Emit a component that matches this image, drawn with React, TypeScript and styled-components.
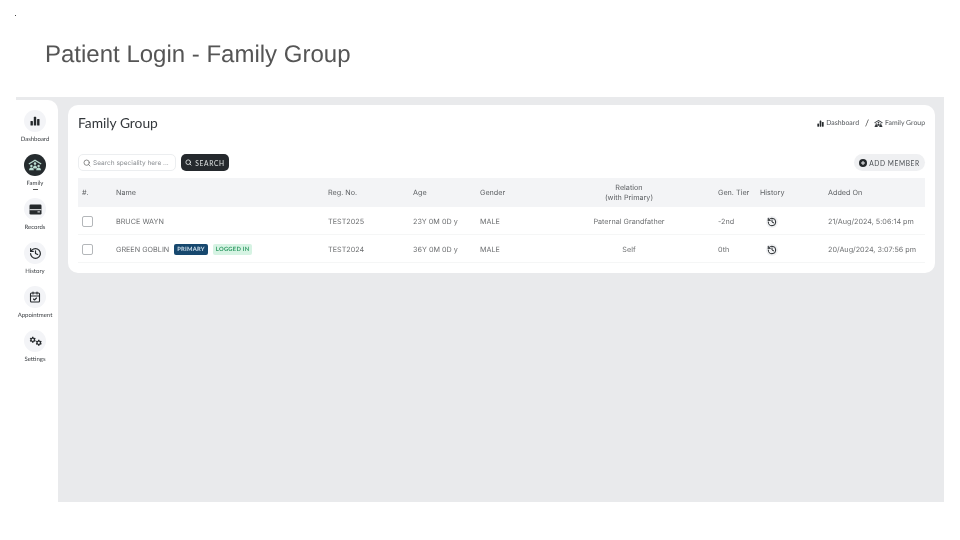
import React from 'react'
import styled, { createGlobalStyle } from 'styled-components'
import { CalendarCheck, History, Search } from 'lucide-react'
import { MdSettings } from 'react-icons/md'

const Global = createGlobalStyle`
  html, body { margin: 0; padding: 0; background: #fff; }
  #root { width: 960px; height: 540px; overflow: hidden; }
  * { box-sizing: border-box; }
`

const Slide = styled.div`
  position: relative;
  width: 960px;
  height: 540px;
  padding: 0 16px;
  font-family: Inter, 'Noto Sans', sans-serif;
  text-rendering: geometricPrecision;
  will-change: transform;
`

const Dot = styled.i`
  position: absolute;
  left: 15px;
  top: 15px;
  width: 1px;
  height: 1px;
  background: #444;
`

const SlideTitle = styled.h1`
  margin: 0;
  height: 97px;
  padding: 40px 0 0 29px;
  font: 400 24px/30px 'Liberation Sans', Arial, sans-serif;
  color: #555;
`

const Shell = styled.div`
  display: flex;
  width: 928px;
  height: 405px;
  padding-top: 3px;
  background: #e9eaec;
`

const Side = styled.nav`
  flex: 0 0 42px;
  display: flex;
  flex-direction: column;
  padding: 10px 4px 0 0;
  background: #fff;
  border-top-right-radius: 10px;
`

const SideItem = styled.div`
  position: relative;
  height: 44px;
  display: flex;
  flex-direction: column;
  align-items: center;
`

const Circle = styled.span<{ $active?: boolean }>`
  width: 22px;
  height: 22px;
  flex: none;
  display: flex;
  align-items: center;
  justify-content: center;
  border-radius: 50%;
  background: ${(p) => (p.$active ? '#252b2e' : '#f3f4f7')};
  color: #25292c;
`

const SideLabel = styled.span`
  margin-top: 4px;
  font: 400 6px/8px Lato, sans-serif;
  color: #3d4145;
  white-space: nowrap;
`

const ActiveDash = styled.i`
  position: absolute;
  top: 35px;
  width: 5px;
  height: 1px;
  background: #555;
`

const GearPair = styled.span`
  width: 13px;
  height: 11px;
  display: flex;
  align-items: flex-start;
  font-size: 7.5px;
  svg {
    flex: none;
  }
  svg:last-child {
    margin: 3.5px 0 0 -1.5px;
  }
`

const Main = styled.main`
  flex: 1;
  padding: 5px 9px 0 10px;
`

const Card = styled.section`
  height: 168px;
  padding: 0 10px;
  background: #fff;
  border-radius: 10px;
`

const TopRow = styled.div`
  height: 49px;
  display: flex;
  align-items: center;
  justify-content: space-between;
  padding-bottom: 13px;
`

const CardTitle = styled.h2`
  margin: 0;
  font: 400 13.8px/18px Lato, sans-serif;
  color: #33373b;
`

const Crumbs = styled.div`
  display: flex;
  align-items: center;
  font: 400 6.9px/8px Lato, sans-serif;
  color: #55595d;
  svg {
    margin-right: 2px;
  }
`

const CrumbSep = styled.span`
  margin: 0 5px 0 6px;
  font-size: 9px;
  color: #333;
`

const Tools = styled.div`
  height: 24px;
  display: flex;
  align-items: flex-start;
`

const SearchBox = styled.div`
  width: 98px;
  height: 17px;
  display: flex;
  align-items: center;
  gap: 2px;
  padding-left: 4px;
  border: 1px solid #eceef0;
  border-radius: 5px;
  font: 400 6.5px/8px Inter, sans-serif;
  color: #8b8f93;
  svg {
    color: #777;
  }
`

const SearchButton = styled.button`
  width: 48px;
  height: 17px;
  margin-left: 5px;
  display: flex;
  align-items: center;
  justify-content: center;
  gap: 3px;
  padding: 0;
  border: 0;
  border-radius: 5px;
  background: #25292d;
  color: #dfe3e3;
  font: 400 6.6px/8px Lato, sans-serif;
  letter-spacing: 0.7px;
`

const AddButton = styled.button`
  width: 71px;
  height: 17px;
  margin-left: auto;
  display: flex;
  align-items: center;
  justify-content: center;
  gap: 2px;
  padding: 0;
  border: 0;
  border-radius: 9px;
  background: #eff0f2;
  color: #4a4e52;
  font: 400 6.6px/8px Lato, sans-serif;
  letter-spacing: 0.6px;
`

const Grid = styled.div<{ $head?: boolean }>`
  display: grid;
  grid-template-columns: 38px 212px 85px 67px 60px 178px 42px 68px 97px;
  align-items: center;
  height: ${(p) => (p.$head ? '29px' : '28px')};
  padding-top: ${(p) => (p.$head ? '0' : '2px')};
  background: ${(p) => (p.$head ? '#f3f4f6' : '#fff')};
  border-bottom: ${(p) => (p.$head ? '0' : '1px solid #f5f6f6')};
  font: 400 7.2px/10px Inter, 'Noto Sans', sans-serif;
  letter-spacing: 0.02px;
  color: ${(p) => (p.$head ? '#5c5f62' : '#6c6e70')};
`

const Center = styled.div`
  text-align: center;
`

const Pad = styled.div`
  padding-left: 4px;
`

const Check = styled.span`
  display: block;
  width: 11px;
  height: 11px;
  border: 1px solid #b4b7ba;
  border-radius: 2px;
`

const NameCell = styled.div`
  display: flex;
  align-items: center;
  white-space: nowrap;
`

const Badge = styled.span<{ $green?: boolean }>`
  height: 11px;
  margin-left: 5px;
  padding: 0 3px;
  border-radius: 2px;
  background: ${(p) => (p.$green ? '#d6f3e3' : '#17486e')};
  color: ${(p) => (p.$green ? '#2e9a63' : '#cfe0ec')};
  font: 700 5.8px/11px Lato, sans-serif;
  letter-spacing: 0.25px;
`

const HistoryDot = styled.span`
  width: 12px;
  height: 12px;
  margin-left: 6px;
  display: flex;
  align-items: center;
  justify-content: center;
  border-radius: 50%;
  background: #f1f2f4;
  color: #25292c;
`

function BarsIcon({ size = 10, color = '#25292c' }: { size?: number; color?: string }) {
  return (
    <svg width={size} height={size} viewBox="0 0 10 10" fill={color}>
      <rect x="0.5" y="5" width="2.4" height="4.5" rx="0.6" />
      <rect x="3.8" y="0.8" width="2.4" height="8.7" rx="0.6" />
      <rect x="7.1" y="3" width="2.4" height="6.5" rx="0.6" />
    </svg>
  )
}

function FamilyIcon({ size = 14, color = '#b9dcd0' }: { size?: number; color?: string }) {
  return (
    <svg width={size} height={size} viewBox="0 0 14 14" fill={color}>
      <path d="M7 1.5 13.5 5.6l-.6 1L7 3 1.1 6.6l-.6-1z" />
      <circle cx="7" cy="5.6" r="1.3" />
      <path d="M4.9 10.5c0-2 .9-3 2.1-3s2.100 1 2.100 3z" />
      <circle cx="3.400" cy="8" r="1.200" />
      <path d="M1 12.300c0-1.900 1-2.900 2.400-2.900s2.400 1 2.400 2.900z" />
      <circle cx="10.600" cy="8" r="1.200" />
      <path d="M8.200 12.300c0-1.900 1-2.900 2.400-2.900s2.400 1 2.400 2.900z" />
    </svg>
  )
}

function CardIcon() {
  return (
    <svg width="13" height="11" viewBox="0 0 13 11">
      <rect x="0.500" y="0.500" width="12" height="10" rx="1.200" fill="#25292c" />
      <rect x="0.500" y="5.200" width="12" height="1" fill="#f3f4f7" />
      <rect x="8.500" y="7.400" width="2.400" height="1" fill="#f3f4f7" />
    </svg>
  )
}

function PlusCircle() {
  return (
    <svg width="8" height="8" viewBox="0 0 8 8">
      <circle cx="4" cy="4" r="4" fill="#25292c" />
      <path d="M4 2v4M2 4h4" stroke="#eff0f2" strokeWidth="1" />
    </svg>
  )
}

const sideItems = [
  { label: 'Dashboard', icon: <BarsIcon /> },
  { label: 'Family', icon: <FamilyIcon />, active: true },
  { label: 'Records', icon: <CardIcon /> },
  { label: 'History', icon: <History size={13} strokeWidth={2.2} /> },
  { label: 'Appointment', icon: <CalendarCheck size={12} strokeWidth={2.2} /> },
  {
    label: 'Settings',
    icon: (
      <GearPair>
        <MdSettings />
        <MdSettings />
      </GearPair>
    )
  }
]

const rows = [
  {
    name: 'BRUCE WAYN',
    reg: 'TEST2025',
    age: '23Y 0M 0D y',
    relation: 'Paternal Grandfather',
    tier: '-2nd',
    added: '21/Aug/2024, 5:06:14 pm'
  },
  {
    name: 'GREEN GOBLIN',
    reg: 'TEST2024',
    age: '36Y 0M 0D y',
    relation: 'Self',
    tier: '0th',
    added: '20/Aug/2024, 3:07:56 pm',
    badges: true
  }
]

export default function App() {
  return (
    <Slide>
      <Global />
      <Dot />
      <SlideTitle>Patient Login - Family Group</SlideTitle>
      <Shell>
        <Side>
          {sideItems.map((item) => (
            <SideItem key={item.label}>
              <Circle $active={item.active}>{item.icon}</Circle>
              <SideLabel>{item.label}</SideLabel>
              {item.active && <ActiveDash />}
            </SideItem>
          ))}
        </Side>
        <Main>
          <Card>
            <TopRow>
              <CardTitle>Family Group</CardTitle>
              <Crumbs>
                <BarsIcon size={7} />
                Dashboard
                <CrumbSep>/</CrumbSep>
                <FamilyIcon size={9} color="#33373b" />
                Family Group
              </Crumbs>
            </TopRow>
            <Tools>
              <SearchBox>
                <Search size={8} strokeWidth={2.5} />
                Search speciality here ...
              </SearchBox>
              <SearchButton>
                <Search size={7} strokeWidth={3} />
                SEARCH
              </SearchButton>
              <AddButton>
                <PlusCircle />
                ADD MEMBER
              </AddButton>
            </Tools>
            <Grid $head>
              <Pad>#.</Pad>
              <div>Name</div>
              <div>Reg. No.</div>
              <div>Age</div>
              <div>Gender</div>
              <Center>
                Relation
                <br />
                (with Primary)
              </Center>
              <div>Gen. Tier</div>
              <div>History</div>
              <div>Added On</div>
            </Grid>
            {rows.map((row) => (
              <Grid key={row.reg}>
                <Pad>
                  <Check />
                </Pad>
                <NameCell>
                  {row.name}
                  {row.badges && <Badge>PRIMARY</Badge>}
                  {row.badges && <Badge $green>LOGGED IN</Badge>}
                </NameCell>
                <div>{row.reg}</div>
                <div>{row.age}</div>
                <div>MALE</div>
                <Center>{row.relation}</Center>
                <div>{row.tier}</div>
                <HistoryDot>
                  <History size={10} strokeWidth={2.4} />
                </HistoryDot>
                <div>{row.added}</div>
              </Grid>
            ))}
          </Card>
        </Main>
      </Shell>
    </Slide>
  )
}
